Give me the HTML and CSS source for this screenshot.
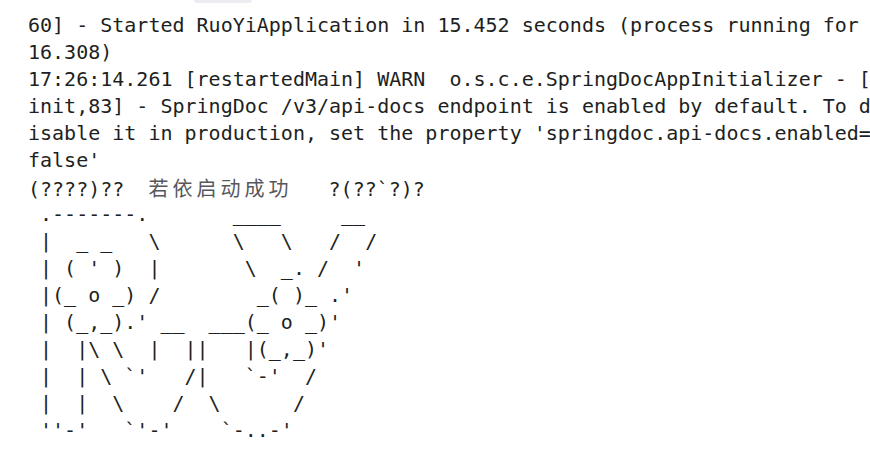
FILE: index.html
```html
<!DOCTYPE html>
<html lang="zh">
<head>
<meta charset="utf-8">
<title>Console</title>
<link rel="stylesheet" href="styles.css">
</head>
<body>
<div class="tab"></div>
<div class="console">
<div class="line">60] - Started RuoYiApplication in 15.452 seconds (process running for</div>
<div class="line">16.308)</div>
<div class="line">17:26:14.261 [restartedMain] WARN  o.s.c.e.SpringDocAppInitializer - [</div>
<div class="line">init,83] - SpringDoc /v3/api-docs endpoint is enabled by default. To d</div>
<div class="line">isable it in production, set the property 'springdoc.api-docs.enabled=</div>
<div class="line">false'</div>
<div class="line">(????)??  <span class="cjk">若依启动成功</span>   ?(??`?)?</div>
<div class="line"> .-------.       ____     __</div>
<div class="line"> |  _ _   \      \   \   /  /</div>
<div class="line"> | ( ' )  |       \  _. /  '</div>
<div class="line"> |(_ o _) /        _( )_ .'</div>
<div class="line"> | (_,_).' __  ___(_ o _)'</div>
<div class="line"> |  |\ \  |  ||   |(_,_)'</div>
<div class="line"> |  | \ `'   /|   `-'  /</div>
<div class="line"> |  |  \    /  \      /</div>
<div class="line"> ''-'   `'-'    `-..-'</div>
</div>
</body>
</html>
```

FILE: styles.css
```css
html, body {
  margin: 0;
  padding: 0;
  background: #ffffff;
}
body {
  width: 870px;
  height: 462px;
  overflow: hidden;
  position: relative;
}
.tab {
  position: absolute;
  left: 194px;
  top: 0;
  width: 58px;
  height: 3px;
  background: #ebedf0;
  border-radius: 0 0 4px 4px;
}
.console {
  padding: 12px 0 0 28px;
  font-family: "DejaVu Sans Mono", "Liberation Mono", monospace;
  font-size: 20px;
  color: #1e1f22;
}
.line {
  height: 27px;
  line-height: 27px;
  white-space: pre;
}
.cjk {
  font-family: "Noto Sans CJK SC", sans-serif;
  font-size: 20px;
  letter-spacing: 4px;
  color: #55575c;
  line-height: 27px;
}
```
